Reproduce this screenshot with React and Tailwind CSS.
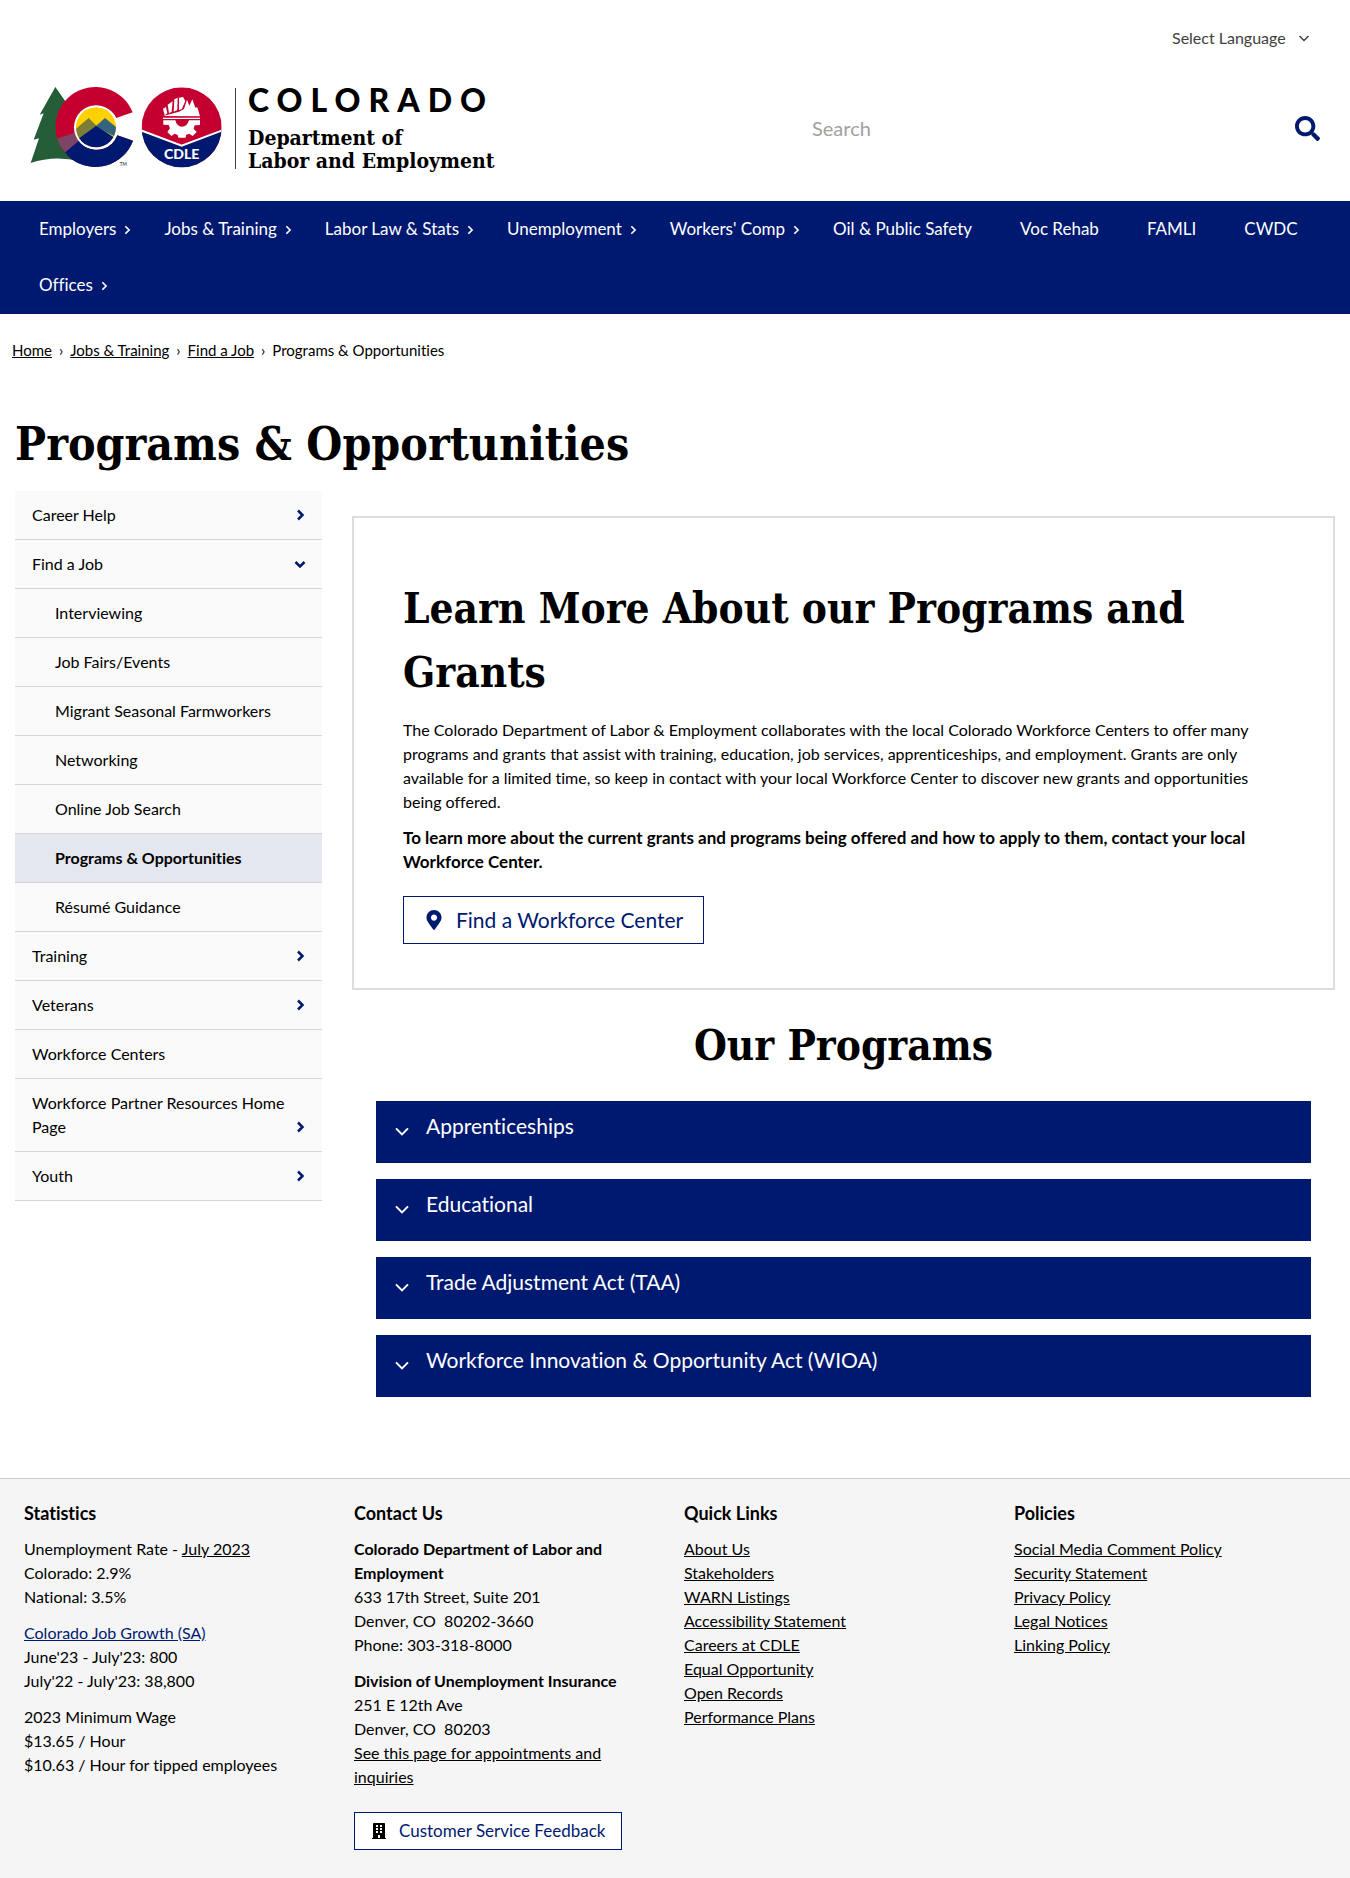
import React from "react";
import { FaMapMarkerAlt, FaBuilding, FaSearch } from "react-icons/fa";

const SANS = "font-['Lato','Open_Sans',sans-serif] [font-variant-ligatures:none]";
const SLAB = "font-['DejaVu_Serif_Condensed','DejaVu_Serif',serif]";

function Chevron({ down = false, className }) {
  return (
    <svg viewBox="0 0 12 12" fill="none" stroke="currentColor" className={className} aria-hidden="true">
      <path d={down ? "M1.5 4 6 8.5 10.5 4" : "M4 1.5 8.5 6 4 10.5"} />
    </svg>
  );
}

function Logo() {
  return (
    <a href="#" className="flex items-start" aria-label="Colorado Department of Labor and Employment">
      <svg viewBox="90 81 579 249" className="mt-[10px] h-[83px] w-[193px] shrink-0" aria-hidden="true">
        <defs>
          <clipPath id="cRing">
            <path d="M398 160A120 120 0 1 0 399 245L352 229A66 66 0 1 1 349 177Z" />
          </clipPath>
          <clipPath id="cSun"><circle cx="288" cy="205" r="60" /></clipPath>
          <clipPath id="badge"><circle cx="545" cy="205" r="120" /></clipPath>
        </defs>
        <path d="M166 84 194 124 240 200V306Q160 288 92 312L117 238 101 242 131 163 119 167Z" fill="#245d38" />
        <g clipPath="url(#cRing)">
          <rect x="150" y="80" width="260" height="250" fill="#c3002f" />
          <path d="M150 270 226 219 260 250 180 310Z" fill="#7e4468" />
          <path d="M150 310 235 242 290 205 410 232V330H150Z" fill="#001970" />
          <path d="M150 245 173 240 212 306 150 330Z" fill="#245d38" />
          <path d="M166 240 176 256 196 280 240 242 226 221Z" fill="#7e4468" />
        </g>
        <circle cx="288" cy="205" r="66" fill="#fff" />
        <g clipPath="url(#cSun)">
          <rect x="220" y="140" width="140" height="130" fill="#ffd100" />
          <path d="M220 216 266 177 320 230 250 260Z" fill="#7c7d37" />
          <path d="M285 203 315 177 360 214V240Z" fill="#35647e" />
          <path d="M220 250 288 201 360 246V280H220Z" fill="#001970" />
        </g>
        <text x="359" y="322" className="font-['Lato',sans-serif] text-[14px]" fill="#111">TM</text>
        <g clipPath="url(#badge)">
          <rect x="425" y="85" width="240" height="240" fill="#c3002f" />
          <path d="M420 213 545 260 670 213V330H420Z" fill="#001970" />
          <path d="M420 213 545 260 670 213" fill="none" stroke="#fff" strokeWidth="6" />
        </g>
        <path d="M489 176H600V180H489Z" fill="#fff" />
        <path d="M490 184H600V198L584 199 581 209 590 219 578 231 567 224 558 228 557 236H535L533 228 524 224 514 231 502 219 510 208 506 198 490 197Z" fill="#fff" />
        <path d="M526 183H567Q562 203 546 203 530 203 526 183Z" fill="#c3002f" />
        <path d="M489 149 498 144 502 163 494 169ZM503 137 518 127 515 158 507 163ZM523 121 533 116 532 153 521 158ZM537 116 549 114 556 126 545 151 537 153Z" fill="#fff" />
        <path d="M489 171 537 158 552 150 561 122 568 140 577 121 586 146 592 145 600 172Z" fill="#fff" />
        <text x="545" y="301" textAnchor="middle" className="font-['Lato',sans-serif] text-[42px] font-black" fill="#fff">CDLE</text>
      </svg>
      <div className="mt-3 ml-3 h-[81px] w-px bg-neutral-700" />
      <div className="ml-3 text-black">
        <div className="font-['Lato',sans-serif] text-[32px] leading-[48px] font-black tracking-[0.25em]">COLORADO</div>
        <div className={`${SLAB} mt-[2px] text-[21px] leading-[23px] font-bold`}>
          Department of
          <br />
          Labor and Employment
        </div>
      </div>
    </a>
  );
}

const NAV = [
  ["Employers", true],
  ["Jobs & Training", true],
  ["Labor Law & Stats", true],
  ["Unemployment", true],
  ["Workers' Comp", true],
  ["Oil & Public Safety", false],
  ["Voc Rehab", false],
  ["FAMLI", false],
  ["CWDC", false],
  ["Offices", true],
];

const SIDE = [
  { t: "Career Help", icon: "right" },
  { t: "Find a Job", icon: "down" },
  { t: "Interviewing", sub: true },
  { t: "Job Fairs/Events", sub: true },
  { t: "Migrant Seasonal Farmworkers", sub: true },
  { t: "Networking", sub: true },
  { t: "Online Job Search", sub: true },
  { t: "Programs & Opportunities", sub: true, active: true },
  { t: "Résumé Guidance", sub: true },
  { t: "Training", icon: "right" },
  { t: "Veterans", icon: "right" },
  { t: "Workforce Centers" },
  { t: "Workforce Partner Resources Home Page", icon: "right" },
  { t: "Youth", icon: "right" },
];

const PROGRAMS = [
  "Apprenticeships",
  "Educational",
  "Trade Adjustment Act (TAA)",
  "Workforce Innovation & Opportunity Act (WIOA)",
];

const QUICK = ["About Us", "Stakeholders", "WARN Listings", "Accessibility Statement", "Careers at CDLE", "Equal Opportunity", "Open Records", "Performance Plans"];
const POLICIES = ["Social Media Comment Policy", "Security Statement", "Privacy Policy", "Legal Notices", "Linking Policy"];

function FooterColumn({ title, children }) {
  return (
    <section className="pr-6">
      <h2 className="text-lg leading-6 font-bold">{title}</h2>
      <div className="mt-3 space-y-3">{children}</div>
    </section>
  );
}

function LinkList({ items }) {
  return (
    <ul>
      {items.map((t) => (
        <li key={t}><a href="#" className="underline">{t}</a></li>
      ))}
    </ul>
  );
}

export default function App() {
  return (
    <div className={`${SANS} min-h-screen bg-white text-base leading-6 text-black`}>
      <header>
        <div className="flex justify-end pt-[26px] pr-10">
          <div className="relative text-neutral-700">
            <select aria-label="Select Language" className="appearance-none bg-transparent pr-6 leading-6">
              <option>Select Language</option>
            </select>
            <Chevron down className="pointer-events-none absolute top-[6px] right-0 size-3 stroke-[1.5]" />
          </div>
        </div>
        <div className="flex items-start justify-between pt-[26px] pr-[30px] pb-[25px] pl-[30px]">
          <div className="h-[100px]"><Logo /></div>
          <form className="mt-7 flex w-[508px] items-center" onSubmit={(e) => e.preventDefault()}>
            <input type="search" aria-label="Search" placeholder="Search" className="h-12 min-w-0 flex-1 bg-transparent text-xl outline-none placeholder:text-neutral-400" />
            <button type="submit" aria-label="Submit search" className="text-[#001970]">
              <FaSearch className="size-[25px]" />
            </button>
          </form>
        </div>
      </header>

      <nav aria-label="Main" className="bg-[#001970] px-[15px] pb-px text-white">
        <ul className="flex flex-wrap">
          {NAV.map(([t, more]) => (
            <li key={t}>
              <a href="#" className="relative block px-6 py-4 text-[17px] leading-6">
                {t}
                {more && <Chevron className="absolute top-6 right-2 size-[10px] stroke-[2]" />}
              </a>
            </li>
          ))}
        </ul>
      </nav>

      <nav aria-label="Breadcrumb" className="px-3 pt-6 text-[15px]">
        <ol className="flex gap-[7px]">
          <li><a href="#" className="underline">Home</a></li>
          <li>›</li>
          <li><a href="#" className="underline">Jobs &amp; Training</a></li>
          <li>›</li>
          <li><a href="#" className="underline">Find a Job</a></li>
          <li>›</li>
          <li>Programs &amp; Opportunities</li>
        </ol>
      </nav>

      <main className="px-[15px] pt-12">
        <h1 className={`${SLAB} text-[46px] leading-[68px] font-bold`}>Programs &amp; Opportunities</h1>
        <div className="mt-[13px] flex items-start gap-[30px]">
          <aside className="w-[307px] shrink-0">
            <ul>
              {SIDE.map((s) => (
                <li key={s.t} className={`border-b border-[#d6d6d6] ${s.active ? "bg-[#e4e7ee] font-bold" : "bg-[#fafafa]"}`}>
                  <a href="#" className={`flex items-end justify-between py-3 pr-4 ${s.sub ? "pl-10" : "pl-[17px]"}`}>
                    <span>{s.t}</span>
                    {s.icon && <Chevron down={s.icon === "down"} className="mb-[6px] size-3 shrink-0 stroke-[2.5] text-[#001970]" />}
                  </a>
                </li>
              ))}
            </ul>
          </aside>

          <div className="min-w-0 flex-1 pt-[25px]">
            <section className="border-2 border-[#dddddd] px-[49px] pt-[59px] pb-[44px]">
              <h2 className={`${SLAB} text-[42px] leading-[64px] font-bold`}>Learn More About our Programs and Grants</h2>
              <p className="mt-[13px]">
                The Colorado Department of Labor &amp; Employment collaborates with the local Colorado Workforce Centers to offer many programs and grants that assist with training, education, job services, apprenticeships, and employment. Grants are only available for a limited time, so keep in contact with your local Workforce Center to discover new grants and opportunities being offered.
              </p>
              <p className="mt-3 text-[17px] font-bold">
                To learn more about the current grants and programs being offered and how to apply to them, contact your local Workforce Center.
              </p>
              <a href="#" className="mt-[22px] inline-flex h-12 items-center gap-3 border border-[#001970] px-5 text-[21px] text-[#001970]">
                <FaMapMarkerAlt className="size-5" />
                Find a Workforce Center
              </a>
            </section>

            <h2 className={`${SLAB} mt-6 text-center text-[42px] leading-[64px] font-bold`}>Our Programs</h2>
            <div className="mt-[23px] space-y-4 px-6">
              {PROGRAMS.map((t) => (
                <button key={t} type="button" className="flex h-[62px] w-full items-start gap-4 bg-[#001970] px-[18px] pt-[13px] text-left text-[21px] leading-6 text-white">
                  <Chevron down className="mt-[9px] size-4 shrink-0 stroke-[1.5]" />
                  {t}
                </button>
              ))}
            </div>
          </div>
        </div>
      </main>

      <footer className="mt-[81px] border-t border-[#cfcfcf] bg-[#f5f5f5] px-6 pt-[22px] pb-7">
        <div className="-mr-[18px] grid grid-cols-4">
          <FooterColumn title="Statistics">
            <p>
              Unemployment Rate - <a href="#" className="underline">July 2023</a><br />
              Colorado: 2.9%<br />
              National: 3.5%
            </p>
            <p>
              <a href="#" className="text-[#001970] underline">Colorado Job Growth (SA)</a><br />
              June'23 - July'23: 800<br />
              July'22 - July'23: 38,800
            </p>
            <p>
              2023 Minimum Wage<br />
              $13.65 / Hour<br />
              $10.63 / Hour for tipped employees
            </p>
          </FooterColumn>
          <FooterColumn title="Contact Us">
            <p>
              <b>Colorado Department of Labor and Employment</b><br />
              633 17th Street, Suite 201<br />
              Denver, CO&nbsp; 80202-3660<br />
              Phone: 303-318-8000
            </p>
            <p>
              <b>Division of Unemployment Insurance</b><br />
              251 E 12th Ave<br />
              Denver, CO&nbsp; 80203<br />
              <a href="#" className="underline">See this page for appointments and inquiries</a>
            </p>
            <a href="#" className="mt-[11px] inline-flex h-[38px] items-center gap-3 border border-[#001970] bg-white px-4 text-[17px] text-[#001970]">
              <FaBuilding className="size-4 text-black" />
              Customer Service Feedback
            </a>
          </FooterColumn>
          <FooterColumn title="Quick Links"><LinkList items={QUICK} /></FooterColumn>
          <FooterColumn title="Policies"><LinkList items={POLICIES} /></FooterColumn>
        </div>
      </footer>
    </div>
  );
}
